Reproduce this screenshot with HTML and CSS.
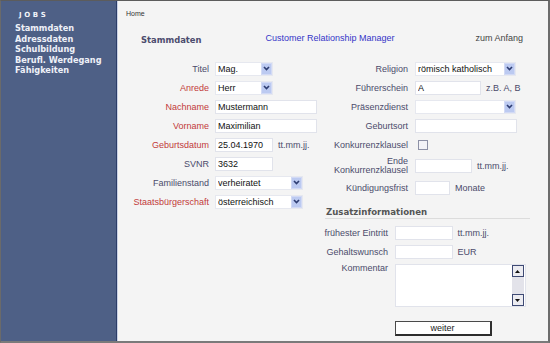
FILE: index.html
```html
<!DOCTYPE html>
<html lang="de">
<head>
<meta charset="utf-8">
<title>Jobs – Stammdaten</title>
<link rel="stylesheet" href="styles.css">
</head>
<body>
<div class="frame">
  <aside class="side">
    <div class="brand">JOBS</div>
    <ul class="nav">
      <li>Stammdaten</li>
      <li>Adressdaten</li>
      <li>Schulbildung</li>
      <li>Berufl. Werdegang</li>
      <li>Fähigkeiten</li>
    </ul>
  </aside>
  <main class="content">
    <div class="crumb">Home</div>
    <div class="head">
      <div class="h-title">Stammdaten</div>
      <div class="h-app">Customer Relationship Manager</div>
      <div class="h-link">zum Anfang</div>
    </div>
    <div class="form">
      <div class="col col-left">
        <div class="row"><label class="lbl">Titel</label><div class="select w58"><span class="val">Mag.</span><span class="arrow"><svg width="7" height="5" viewBox="0 0 7 5"><polyline points="1,1 3.5,3.6 6,1" fill="none" stroke="#2e3d72" stroke-width="1.6"/></svg></span></div></div>
        <div class="row"><label class="lbl req">Anrede</label><div class="select w58"><span class="val">Herr</span><span class="arrow"><svg width="7" height="5" viewBox="0 0 7 5"><polyline points="1,1 3.5,3.6 6,1" fill="none" stroke="#2e3d72" stroke-width="1.6"/></svg></span></div></div>
        <div class="row"><label class="lbl req">Nachname</label><input class="inp w102" type="text" value="Mustermann"></div>
        <div class="row"><label class="lbl req">Vorname</label><input class="inp w102" type="text" value="Maximilian"></div>
        <div class="row"><label class="lbl req">Geburtsdatum</label><input class="inp w58" type="text" value="25.04.1970"><span class="hint">tt.mm.jj.</span></div>
        <div class="row"><label class="lbl">SVNR</label><input class="inp w58" type="text" value="3632"></div>
        <div class="row"><label class="lbl">Familienstand</label><div class="select w88"><span class="val">verheiratet</span><span class="arrow"><svg width="7" height="5" viewBox="0 0 7 5"><polyline points="1,1 3.5,3.6 6,1" fill="none" stroke="#2e3d72" stroke-width="1.6"/></svg></span></div></div>
        <div class="row"><label class="lbl req">Staatsbürgerschaft</label><div class="select w88"><span class="val">österreichisch</span><span class="arrow"><svg width="7" height="5" viewBox="0 0 7 5"><polyline points="1,1 3.5,3.6 6,1" fill="none" stroke="#2e3d72" stroke-width="1.6"/></svg></span></div></div>
      </div>
      <div class="col col-right">
        <div class="row r2"><label class="lbl">Religion</label><div class="select w101"><span class="val">römisch katholisch</span><span class="arrow"><svg width="7" height="5" viewBox="0 0 7 5"><polyline points="1,1 3.5,3.6 6,1" fill="none" stroke="#2e3d72" stroke-width="1.6"/></svg></span></div></div>
        <div class="row r2"><label class="lbl">Führerschein</label><input class="inp w66" type="text" value="A"><span class="hint">z.B. A, B</span></div>
        <div class="row r2"><label class="lbl">Präsenzdienst</label><div class="select w101"><span class="val"></span><span class="arrow"><svg width="7" height="5" viewBox="0 0 7 5"><polyline points="1,1 3.5,3.6 6,1" fill="none" stroke="#2e3d72" stroke-width="1.6"/></svg></span></div></div>
        <div class="row r2"><label class="lbl">Geburtsort</label><input class="inp w102" type="text" value=""></div>
        <div class="row r2"><label class="lbl">Konkurrenzklausel</label><input class="chk" type="checkbox"></div>
        <div class="row r2 tall"><label class="lbl two">Ende<br>Konkurrenzklausel</label><input class="inp w57" type="text" value=""><span class="hint">tt.mm.jj.</span></div>
        <div class="row r2 mid"><label class="lbl">Kündigungsfrist</label><input class="inp w35" type="text" value=""><span class="hint">Monate</span></div>

        <div class="sub-head">Zusatzinformationen</div>
        <div class="row r3"><label class="lbl">frühester Eintritt</label><input class="inp w58" type="text" value=""><span class="hint">tt.mm.jj.</span></div>
        <div class="row r3"><label class="lbl">Gehaltswunsch</label><input class="inp w58" type="text" value=""><span class="hint">EUR</span></div>
        <div class="row r3 top"><label class="lbl">Kommentar</label>
          <div class="area">
            <div class="area-body"></div>
            <div class="scroll">
              <span class="sbtn"><svg width="5" height="3" viewBox="0 0 5 3"><polygon points="0,3 2.5,0 5,3" fill="#111"/></svg></span>
              <span class="track"></span>
              <span class="sbtn"><svg width="5" height="3" viewBox="0 0 5 3"><polygon points="0,0 2.5,3 5,0" fill="#111"/></svg></span>
            </div>
          </div>
        </div>
        <div class="actions"><button class="btn" type="button">weiter</button></div>
      </div>
    </div>
  </main>
</div>
</body>
</html>
```
FILE: styles.css
```css
* { box-sizing: border-box; }
html, body { margin: 0; padding: 0; }
body {
  width: 550px;
  height: 343px;
  overflow: hidden;
  font-family: "Liberation Sans", Arial, sans-serif;
  font-size: 9px;
  background: #f4f4f4;
}
.frame {
  display: flex;
  width: 550px;
  height: 343px;
  border-top: 1px solid #5c5c5c;
  border-left: 1px solid #6a6a6a;
  border-right: 2px solid #6c6c6c;
  border-bottom: 2px solid #7a7a7a;
}
.side {
  width: 116px;
  flex: none;
  background: #4e6086;
  border-right: 1px solid #2b3d68;
  padding: 10px 0 0 14px;
  color: #eef1f8;
}
.brand {
  font: bold 7px/9px "DejaVu Sans", Verdana, sans-serif;
  letter-spacing: 2.6px;
  margin-left: 4px;
  color: #f2f4fa;
}
.nav {
  list-style: none;
  margin: 3px 0 0;
  padding: 0;
  font: bold 8.2px/10.6px "DejaVu Sans", Verdana, sans-serif;
}
.content {
  flex: 1;
  background: #f4f4f4;
  border-left: 1px solid #c8d1e6;
  padding-top: 8px;
  color: #4b4b6b;
}
.crumb {
  margin-left: 8px;
  font-size: 7px;
  line-height: 9px;
  color: #333;
}
.head {
  display: grid;
  grid-template-columns: 124.5px 210px auto;
  margin-top: 16px;
  padding-left: 23px;
  line-height: 12px;
}
.h-title {
  font: bold 8.4px/14px "DejaVu Sans", Verdana, sans-serif;
  color: #4c4c6e;
  margin-top: -1px;
}
.h-app { color: #3535c8; margin-top: -2px; }
.h-link { color: #444; margin-top: -2px; }

.form {
  display: flex;
  margin-top: 12px;
}
.col-left { width: 202px; flex: none; }
.col-right { width: 228px; flex: none; }
.row {
  display: flex;
  align-items: center;
  height: 19px;
}
.lbl {
  width: 91px;
  flex: none;
  text-align: right;
  margin-right: 6px;
  color: #4b4b6b;
  white-space: nowrap;
}
.lbl.req { color: #c23a3a; }
.r2 .lbl { width: 88px; margin-right: 7px; }
.r3 .lbl { width: 68px; margin-right: 6.5px; }
.row.tall { height: 24px; }
.row.mid { height: 20px; }
.lbl.two { line-height: 9.5px; }

.inp {
  height: 14px;
  border: 1px solid #e1e3eb;
  background: #fff;
  padding: 0 2px;
  margin: 0;
  font: 9px "Liberation Sans", Arial, sans-serif;
  color: #111;
  outline: none;
}
.w35 { width: 35px; }
.w57 { width: 57px; }
.w58 { width: 58px; }
.w66 { width: 66px; }
.w88 { width: 88px; }
.w101 { width: 101px; }
.w102 { width: 102px; }
.hint { margin-left: 5px; color: #4b4b6b; }

.select {
  display: flex;
  align-items: center;
  height: 14px;
  border: 1px solid #e6e8ef;
  background: #fff;
  padding: 0 0 0 2px;
  color: #111;
}
.select .val { flex: 1; white-space: nowrap; overflow: hidden; }
.select .arrow {
  width: 11px;
  height: 12px;
  background: #bccaf1;
  border: 1px solid #d2daf5;
  display: flex;
  align-items: center;
  justify-content: center;
}
.chk {
  -webkit-appearance: none;
  appearance: none;
  width: 10px;
  height: 10px;
  margin: 0 0 0 3px;
  border: 1px solid #8d91a6;
  background: #f3f3f7;
}
.sub-head {
  margin: 8px 18px 0 5px;
  padding-left: 1px;
  font: bold 8.6px/12px "DejaVu Sans", Verdana, sans-serif;
  color: #555;
  border-bottom: 1px solid #dcdcdc;
}
.sub-head + .row { margin-top: 4px; }
.row.top { align-items: flex-start; height: auto; margin-top: 3px; }
.row.top .lbl { margin-top: -1px; line-height: 11px; }
.area {
  display: flex;
  width: 131px;
  height: 43px;
  border: 1px solid #e1e3eb;
  background: #fff;
}
.area-body { flex: 1; }
.scroll {
  width: 13px;
  display: flex;
  flex-direction: column;
  padding-right: 1px;
}
.sbtn {
  height: 12px;
  width: 12px;
  background: #ececf1;
  border: 1px solid #3e4a74;
  display: flex;
  align-items: center;
  justify-content: center;
}
.track { flex: 1; background: #e3e3ea; width: 12px; }
.actions { margin: 14px 0 0 74.5px; }
.btn {
  width: 97px;
  height: 15px;
  padding: 0;
  background: #fff;
  border: 1px solid #4a4a4a;
  border-right: 2px solid #2e2e2e;
  border-bottom: 2px solid #2e2e2e;
  font: 9px "Liberation Sans", Arial, sans-serif;
  color: #1a1a1a;
}
```
